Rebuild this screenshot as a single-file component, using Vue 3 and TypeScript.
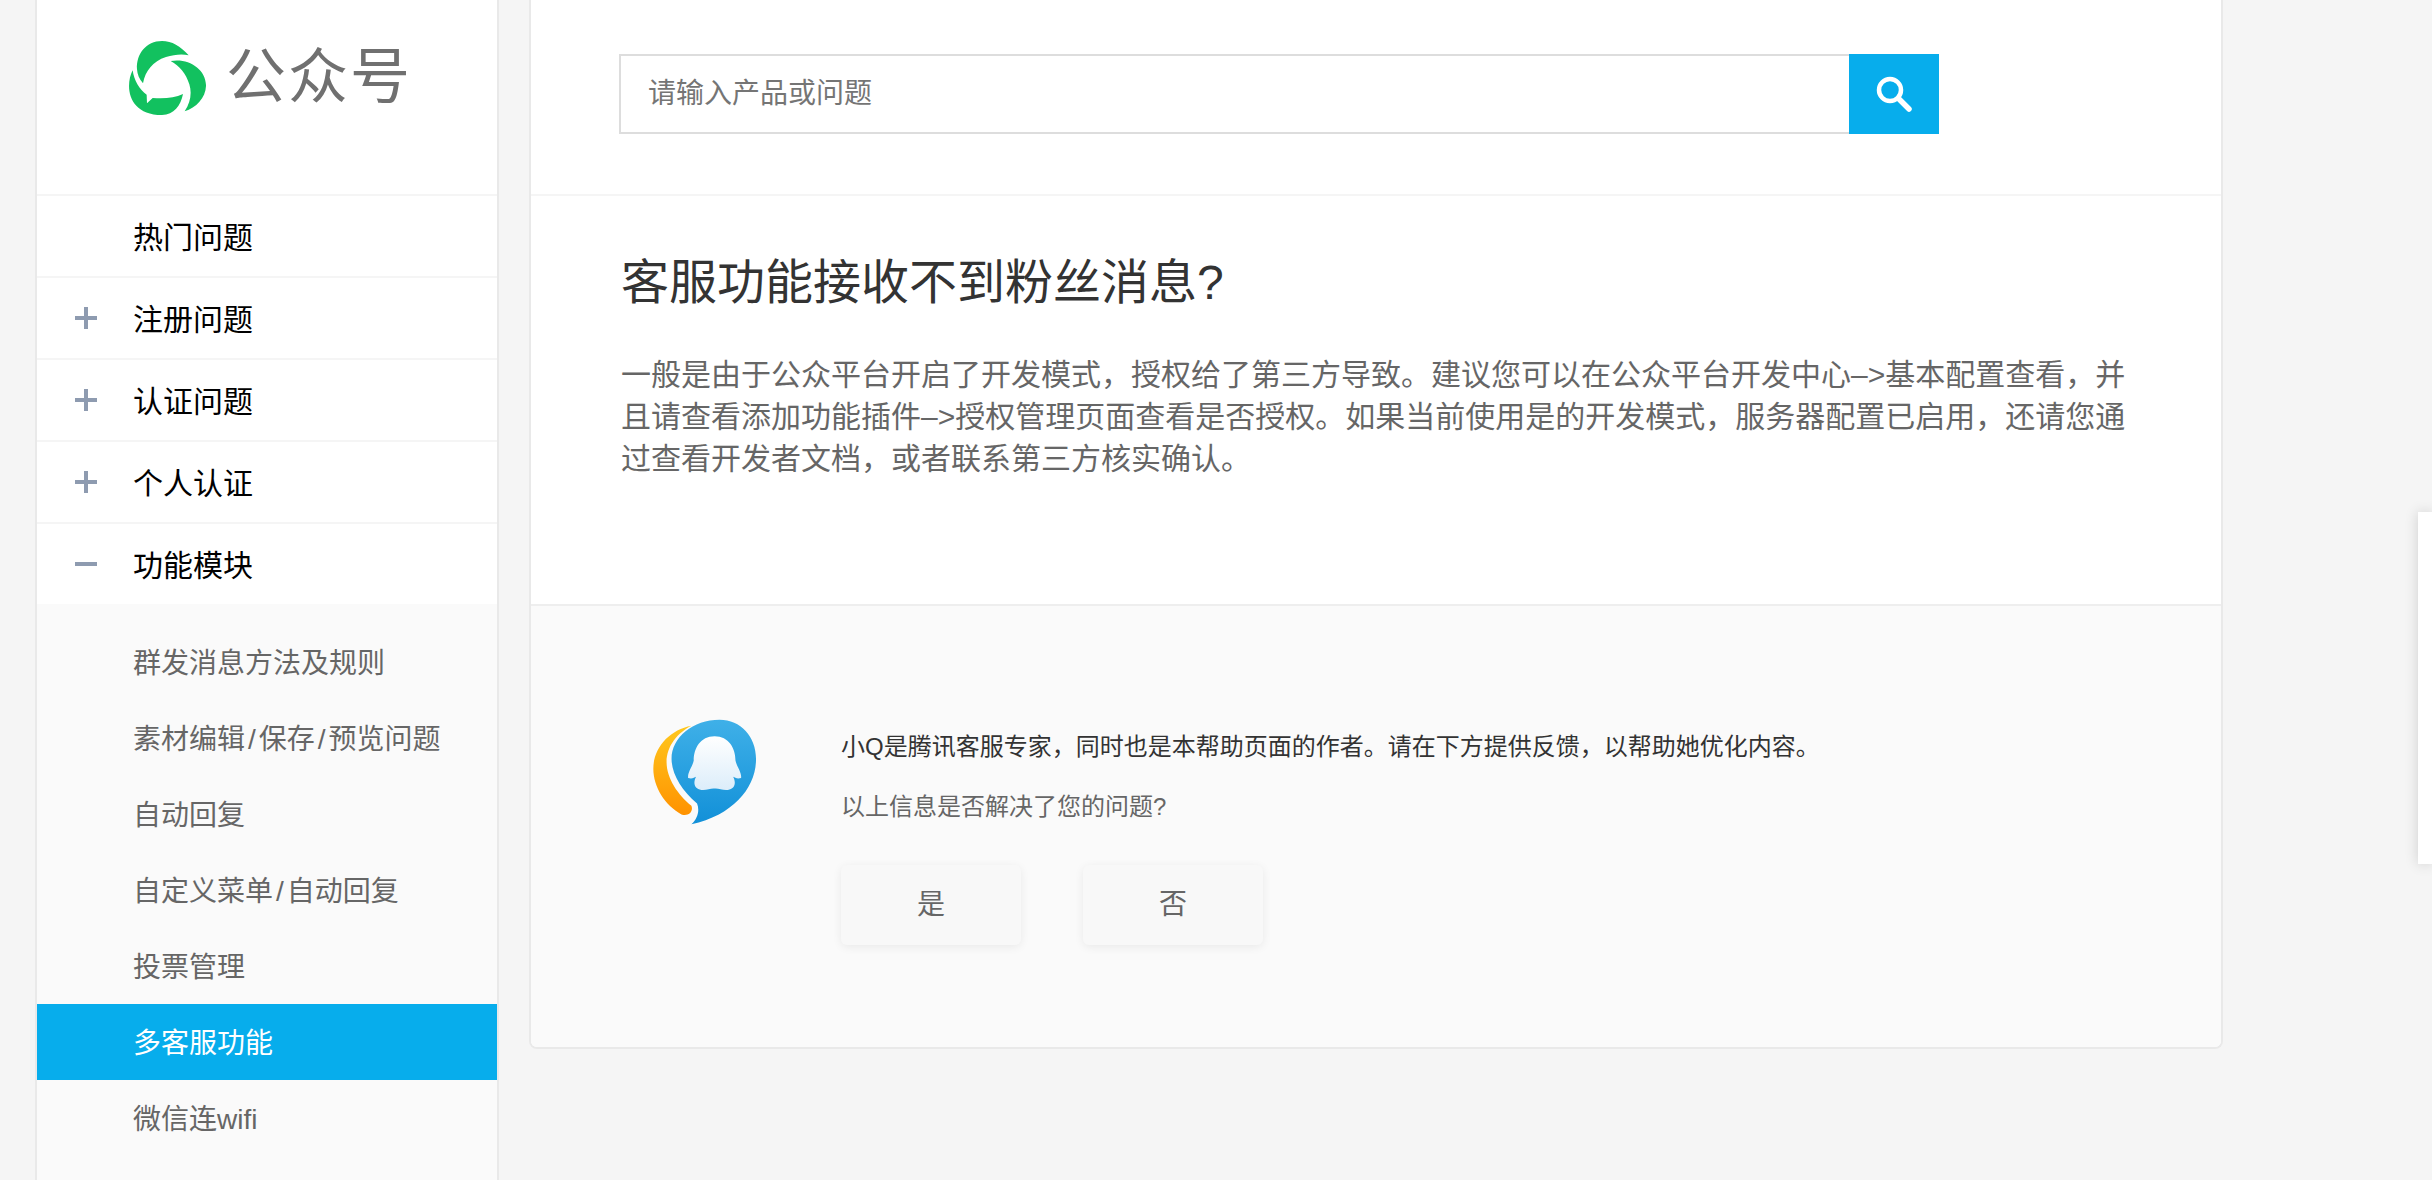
<script setup lang="ts">
interface Group {
  label: string
  state: 'none' | 'plus' | 'minus'
}

const groups: Group[] = [
  { label: '热门问题', state: 'none' },
  { label: '注册问题', state: 'plus' },
  { label: '认证问题', state: 'plus' },
  { label: '个人认证', state: 'plus' },
  { label: '功能模块', state: 'minus' },
]

const subItems: string[] = [
  '群发消息方法及规则',
  '素材编辑/保存/预览问题',
  '自动回复',
  '自定义菜单/自动回复',
  '投票管理',
  '多客服功能',
  '微信连wifi',
]
const activeItem = '多客服功能'

// Keep the separators as their own tokens so they can be spaced like the reference.
const tokens = (s: string): string[] => s.split(/(\/)/).filter(Boolean)
</script>

<template>
  <div class="page">
    <aside class="sidebar">
      <div class="brand">
        <svg class="brand-mark" viewBox="55 65 237 222" aria-hidden="true">
          <path fill="#12c15f" d="M240 108C215 80 190 65 160 65C112 65 82 105 85 150C86 165 92 180 103 192C110 155 132 126 172 113C197 105 222 103 240 108Z" />
          <path fill="#12c15f" d="M186 125C240 115 293 150 292 200C291 235 262 266 228 276C246 250 250 220 242 195C232 162 213 140 186 125Z" />
          <path fill="#12c15f" d="M72 153C48 200 58 287 160 287C196 286 216 260 223 224C198 236 170 238 132 236L115 252L114 226C92 210 76 183 72 153Z" />
        </svg>
        <span class="brand-name">公众号</span>
      </div>
      <nav class="nav">
        <div v-for="g in groups" :key="g.label" class="group">
          <span class="toggle" :class="g.state"></span>
          <span class="group-label">{{ g.label }}</span>
        </div>
        <ul class="sub">
          <li v-for="s in subItems" :key="s" class="sub-item" :class="{ active: s === activeItem }">
            <template v-for="(t, i) in tokens(s)" :key="i"><span v-if="t === '/'" class="slash">/</span><template v-else>{{ t }}</template></template>
          </li>
        </ul>
      </nav>
    </aside>

    <main class="main">
      <section class="search-area">
        <form class="search" @submit.prevent>
          <input class="search-input" type="text" placeholder="请输入产品或问题" />
          <button class="search-btn" type="submit" aria-label="搜索">
            <svg width="40" height="40" viewBox="0 0 40 40" aria-hidden="true">
              <circle cx="16" cy="16" r="11" fill="none" stroke="#fff" stroke-width="4.5" />
              <path d="M24.5 24.5L35 35" stroke="#fff" stroke-width="5.5" stroke-linecap="round" />
            </svg>
          </button>
        </form>
      </section>

      <article class="article">
        <h1 class="title">客服功能接收不到粉丝消息?</h1>
        <p class="body">一般是由于公众平台开启了开发模式&#xFF0C;授权给了第三方导致。建议您可以在公众平台开发中心–&gt;基本配置查看&#xFF0C;并且请查看添加功能插件–&gt;授权管理页面查看是否授权。如果当前使用是的开发模式&#xFF0C;服务器配置已启用&#xFF0C;还请您通过查看开发者文档&#xFF0C;或者联系第三方核实确认。</p>
      </article>

      <section class="feedback">
        <svg class="avatar" viewBox="39 51 314 318" aria-hidden="true">
          <defs>
            <linearGradient id="orangeGrad" x1="0" y1="0" x2="0" y2="1">
              <stop offset="0" stop-color="#ffc81e" />
              <stop offset="1" stop-color="#ff9200" />
            </linearGradient>
            <linearGradient id="blueGrad" x1="0" y1="0" x2="0" y2="1">
              <stop offset="0" stop-color="#3fb0e8" />
              <stop offset="1" stop-color="#1290d8" />
            </linearGradient>
            <linearGradient id="penguinGrad" x1="0" y1="0" x2="0" y2="1">
              <stop offset="0" stop-color="#ffffff" />
              <stop offset="1" stop-color="#dcedfa" />
            </linearGradient>
          </defs>
          <path fill="url(#orangeGrad)" d="M155 70C90 82 40 135 40 200C40 255 75 310 125 338C145 345 162 330 155 312C115 280 80 230 80 180C80 130 115 90 155 70Z" />
          <path fill="url(#blueGrad)" d="M240 52C305 52 352 105 350 175C348 260 280 340 155 368C175 350 180 325 172 305C125 265 95 215 95 170C95 105 160 52 240 52Z" />
          <path fill="url(#penguinGrad)" d="M225 102C268 102 288 138 288 175C292 195 307 210 305 228C292 232 287 226 281 224C291 242 286 262 265 264C250 266 235 258 225 260C215 258 200 266 185 264C164 262 159 242 169 224C163 226 158 232 145 228C143 210 158 195 162 175C162 138 182 102 225 102Z" />
        </svg>
        <div class="feedback-body">
          <p class="intro">小Q是腾讯客服专家&#xFF0C;同时也是本帮助页面的作者。请在下方提供反馈&#xFF0C;以帮助她优化内容。</p>
          <p class="ask">以上信息是否解决了您的问题?</p>
          <div class="answers">
            <button class="answer" type="button">是</button>
            <button class="answer" type="button">否</button>
          </div>
        </div>
      </section>
    </main>

    <div class="side-panel"></div>
  </div>
</template>

<style>
html,
body {
  margin: 0;
  background: #f5f5f5;
  overflow: hidden;
}
</style>

<style scoped>
.page {
  position: relative;
  display: flex;
  align-items: flex-start;
  gap: 30px;
  height: 1180px;
  padding-left: 35px;
  box-sizing: border-box;
  overflow: hidden;
  background: #f5f5f5;
  font-family: "Liberation Sans", "Noto Sans CJK SC", sans-serif;
}

.sidebar {
  display: flex;
  flex-direction: column;
  flex: none;
  width: 464px;
  height: 1180px;
  box-sizing: border-box;
  background: #fff;
  border-left: 2px solid #e9e9e9;
  border-right: 2px solid #e9e9e9;
}

.brand {
  display: flex;
  align-items: flex-start;
  flex: none;
  height: 194px;
  box-sizing: border-box;
  padding: 41px 0 0 90px;
}

.brand-mark {
  width: 79px;
  height: 74px;
  flex: none;
}

.brand-name {
  margin: 1px 0 0 20px;
  font-size: 60px;
  line-height: 72px;
  font-weight: 400;
  letter-spacing: 2px;
  color: #707070;
}

.nav {
  display: flex;
  flex-direction: column;
  flex: 1;
}

.group {
  display: flex;
  align-items: center;
  height: 82px;
  box-sizing: border-box;
  padding-left: 38px;
  border-top: 2px solid #f5f5f5;
  font-size: 30px;
  color: #000;
}

.group-label {
  padding-bottom: 3px;
}

.toggle {
  position: relative;
  flex: none;
  width: 22px;
  height: 22px;
  margin-right: 36px;
}

.toggle.plus::before,
.toggle.minus::before {
  content: "";
  position: absolute;
  left: 0;
  top: 9px;
  width: 22px;
  height: 4px;
  background: #8e9bb0;
}

.toggle.plus::after {
  content: "";
  position: absolute;
  left: 9px;
  top: 0;
  width: 4px;
  height: 22px;
  background: #8e9bb0;
}

.sub {
  flex: 1;
  margin: 0;
  padding: 20px 0 0;
  list-style: none;
  background: #fafafa;
}

.sub-item {
  height: 76px;
  padding-left: 96px;
  font-size: 28px;
  line-height: 80px;
  color: #666;
}

.sub-item.active {
  background: #07adec;
  color: #fff;
}

.slash {
  padding: 0 3px;
}

.main {
  flex: none;
  width: 1694px;
  box-sizing: border-box;
  background: #fff;
  border: 2px solid #e9e9e9;
  border-top: 0;
  border-radius: 0 0 8px 8px;
  overflow: hidden;
}

.search-area {
  height: 194px;
  box-sizing: border-box;
  padding: 54px 0 0 88px;
}

.search {
  display: flex;
  width: 1320px;
  height: 80px;
}

.search-input {
  flex: 1;
  min-width: 0;
  box-sizing: border-box;
  padding: 0 27px;
  border: 2px solid #ddd;
  border-right: 0;
  outline: 0;
  background: #fff;
  font: inherit;
  font-size: 28px;
  color: #333;
}

.search-input::placeholder {
  color: #757575;
  opacity: 1;
}

.search-btn {
  display: flex;
  align-items: center;
  justify-content: center;
  flex: none;
  width: 90px;
  padding: 0;
  border: 0;
  background: #07adec;
}

.article {
  height: 410px;
  box-sizing: border-box;
  padding: 57px 90px 0;
  border-top: 2px solid #f5f5f5;
}

.title {
  margin: 0;
  font-size: 48px;
  line-height: 60px;
  font-weight: 400;
  color: #333;
}

.body {
  margin: 41px 0 0;
  font-size: 30px;
  line-height: 42px;
  color: #666;
}

.feedback {
  display: flex;
  align-items: flex-start;
  height: 443px;
  box-sizing: border-box;
  padding: 113px 0 0 122px;
  border-top: 2px solid #eee;
  background: #fafafa;
}

.avatar {
  flex: none;
  width: 104px;
  height: 106px;
}

.feedback-body {
  margin: 10px 0 0 84px;
}

.intro,
.ask {
  margin: 0;
  font-size: 24px;
  line-height: 36px;
}

.intro {
  color: #333;
}

.ask {
  margin-top: 24px;
  color: #666;
}

.answers {
  display: flex;
  gap: 62px;
  margin-top: 40px;
}

.answer {
  width: 180px;
  height: 80px;
  padding: 0 0 6px;
  border: 0;
  border-radius: 6px;
  background: #f8f8f8;
  box-shadow: 0 2px 10px rgba(0, 0, 0, 0.07);
  font: inherit;
  font-size: 28px;
  color: #666;
}

.side-panel {
  position: absolute;
  top: 512px;
  right: 0;
  width: 14px;
  height: 352px;
  background: #fff;
  box-shadow: 0 0 14px rgba(0, 0, 0, 0.16);
}
</style>
